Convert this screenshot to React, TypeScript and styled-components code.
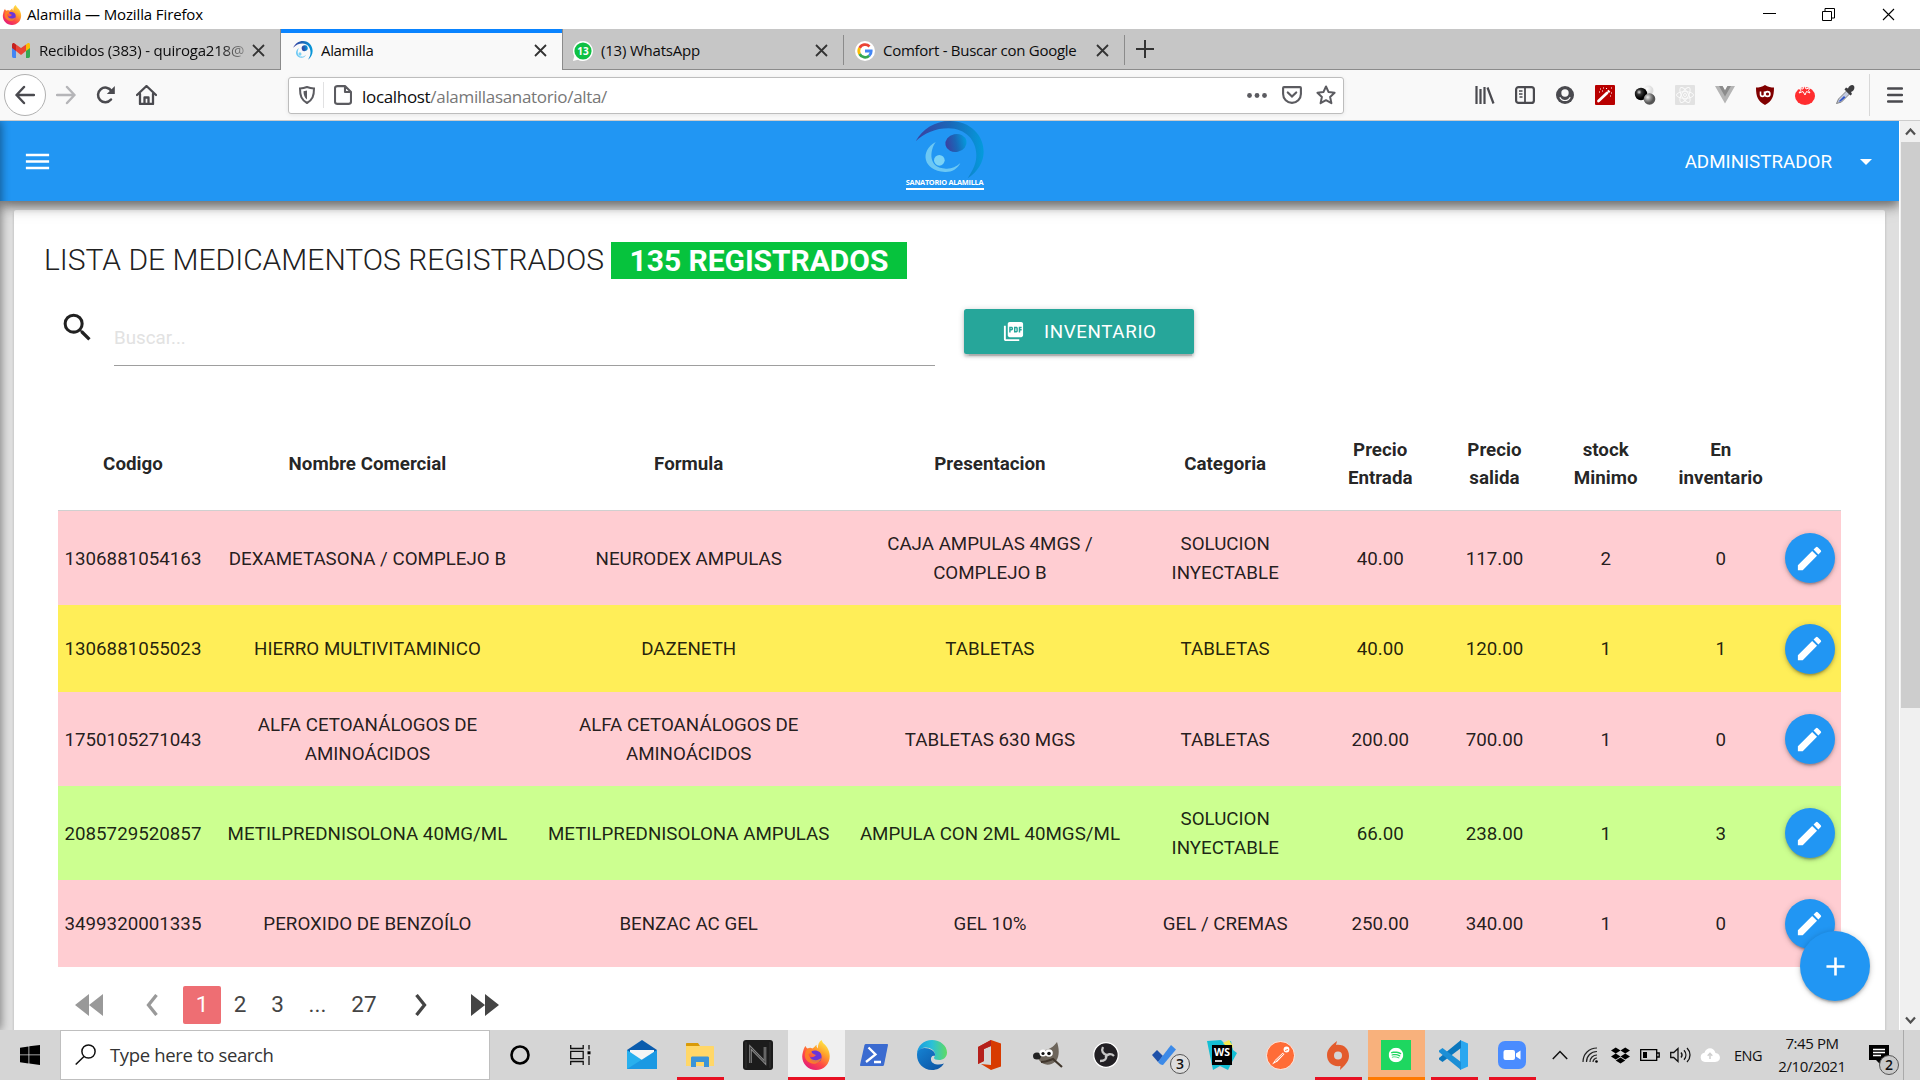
import React from "react";
import styled, { createGlobalStyle, css } from "styled-components";
import { MdEdit, MdSearch, MdPictureAsPdf, MdMenu, MdAdd } from "react-icons/md";
import { FaSpotify, FaDropbox } from "react-icons/fa";

const GlobalStyle = createGlobalStyle`
  * { box-sizing: border-box; }
  html, body { margin: 0; padding: 0; background: #fff; }
  body { width: 1920px; height: 1080px; overflow: hidden; font-family: Roboto, sans-serif; }
  svg { display: block; flex: none; }
`;

const systemFont = css`
  font-family: "Open Sans", "Noto Sans", sans-serif;
`;

const Desktop = styled.div`
  width: 1920px;
  height: 1080px;
  display: flex;
  flex-direction: column;
  overflow: hidden;
`;

/* ---------- window chrome ---------- */

const TitleBar = styled.header`
  ${systemFont}
  height: 29px;
  flex: none;
  display: flex;
  align-items: center;
  padding-left: 2px;
  background: #fff;
  color: #000;
  font-size: 15px;
  letter-spacing: -0.12px;
`;

const WindowTitle = styled.span`
  margin-left: 5px;
  flex: 1;
  padding-bottom: 2px;
  white-space: nowrap;
`;

const WindowControls = styled.div`
  display: flex;
  width: 178px;
  justify-content: space-around;
  margin-right: 2px;
`;

const TabStrip = styled.nav`
  ${systemFont}
  height: 41px;
  flex: none;
  display: flex;
  background: #c6c6c6;
  box-shadow: inset 0 -1px #8b8b8b;
`;

const TabItem = styled.div<{ $active?: boolean; $width: number; $pad: number }>`
  width: ${(p) => p.$width}px;
  height: 41px;
  display: flex;
  align-items: center;
  padding: 2px 15px 0 ${(p) => p.$pad}px;
  background: ${(p) => (p.$active ? "#f9f9f9" : "transparent")};
  ${(p) =>
    p.$active &&
    css`
      border-left: 1px solid #8b8b8b;
      border-right: 1px solid #8b8b8b;
      box-shadow: inset 0 4px #0a84ff;
    `}
`;

const TabLabel = styled.span<{ $fade?: boolean; $tracking?: number }>`
  flex: 1;
  margin-left: ${(p) => (p.$fade ? 9 : 8)}px;
  padding-bottom: 2px;
  overflow: hidden;
  white-space: nowrap;
  font-size: 15px;
  letter-spacing: ${(p) => p.$tracking ?? -0.2}px;
  color: #0c0c0d;
  ${(p) =>
    p.$fade &&
    css`
      mask-image: linear-gradient(to right, #000 86%, rgba(0, 0, 0, 0.25));
      margin-right: 5px;
    `}
`;

const TabDivider = styled.i`
  width: 1px;
  height: 30px;
  margin-top: 6px;
  background: #8b8b8b;
`;

const NewTab = styled.div`
  padding: 11px 0 0 11px;
`;

const Toolbar = styled.div`
  ${systemFont}
  height: 51px;
  flex: none;
  display: flex;
  align-items: center;
  background: #f9f9f9;
  border-bottom: 1px solid #ccc;
  padding-left: 4px;
`;

const BackButton = styled.div`
  width: 42px;
  height: 42px;
  border-radius: 50%;
  border: 1px solid #b1b1b1;
  background: #fff;
  display: grid;
  place-items: center;
`;

const NavIcon = styled.div`
  width: 40px;
  display: grid;
  place-items: center;
`;

const AddressBar = styled.div`
  flex: none;
  width: 1056px;
  height: 37px;
  margin-left: 122px;
  display: flex;
  align-items: center;
  background: #fff;
  border: 1px solid #bdbdbd;
  border-radius: 3px;
  box-shadow: 0 1px 4px rgba(0, 0, 0, 0.08);
  padding: 0 7px 0 10px;
`;

const AddressDivider = styled.i`
  width: 1px;
  height: 26px;
  margin: 0 10px 0 8px;
  background: #e1e1e2;
`;

const Address = styled.span`
  flex: 1;
  margin-left: 10px;
  padding-top: 2px;
  font-size: 17px;
  letter-spacing: -0.32px;
  color: #777;
  white-space: nowrap;
  b {
    font-weight: 400;
    color: #0c0c0d;
  }
`;

const AddressActions = styled.div`
  display: flex;
  align-items: center;
  gap: 14.5px;
`;

const Extensions = styled.div`
  display: flex;
  flex: none;
  margin-left: 121px;
`;

const ExtensionSlot = styled.div`
  width: 40px;
  height: 42px;
  display: grid;
  place-items: center;
`;

const MenuSlot = styled.div`
  flex: none;
  margin-left: 4px;
  width: 51px;
  height: 42px;
  border-left: 1px solid #d8d8d8;
  display: grid;
  place-items: center;
`;

/* ---------- web page ---------- */

const Viewport = styled.div`
  height: 909px;
  flex: none;
  display: flex;
  overflow: hidden;
`;

const Page = styled.div`
  position: relative;
  width: 1899px;
  height: 909px;
  overflow: hidden;
  background: #dfdfdf;
`;

const DrawerShadow = styled.div`
  position: absolute;
  z-index: 3;
  left: -10px;
  top: 0;
  bottom: 0;
  width: 10px;
  box-shadow: 1px 0 10px rgba(0, 0, 0, 0.45);
`;

const AppBar = styled.div`
  position: relative;
  z-index: 2;
  height: 80px;
  display: flex;
  align-items: center;
  justify-content: space-between;
  padding: 0 27px 0 22px;
  background: #2196f3;
  color: #fff;
  box-shadow: 0 5px 10px rgba(0, 0, 0, 0.42), 0 2px 18px rgba(0, 0, 0, 0.25);
`;

const Brand = styled.div`
  align-self: flex-start;
  margin-left: 152px;
  width: 80px;
  display: flex;
  flex-direction: column;
  align-items: center;
`;

const BrandMark = styled.div`
  align-self: flex-end;
`;

const BrandName = styled.div`
  font: 700 7.4px "Open Sans", sans-serif;
  line-height: 9px;
  white-space: nowrap;
  letter-spacing: -0.3px;
  width: 78px;
  height: 12px;
  border-bottom: 2px solid #fff;
  margin-top: -1px;
`;

const UserMenu = styled.div`
  display: flex;
  align-items: center;
  gap: 28px;
  font-size: 18.75px;
  padding-top: 1px;
`;

const Caret = styled.i`
  border: 6px solid transparent;
  border-top: 6px solid #fff;
  border-bottom: 0;
`;

const Card = styled.main`
  margin: 9px 14px 0;
  height: 860px;
  padding: 29px 30px 0;
  background: #fff;
  border-radius: 2px;
  box-shadow: 0 2px 3px rgba(0, 0, 0, 0.2);
`;

const Heading = styled.h1`
  margin: 0;
  height: 42px;
  line-height: 42px;
  font-size: 30px;
  font-weight: 300;
  color: #212121;
  white-space: nowrap;
  display: flex;
  align-items: center;
  gap: 7px;
`;

const CountBadge = styled.span`
  height: 37px;
  line-height: 37px;
  padding: 0 18.5px;
  background: #06c33d;
  color: #fff;
  font-weight: 700;
  letter-spacing: -0.05px;
`;

const Tools = styled.div`
  display: flex;
  margin-left: 15px;
  height: 84px;
  margin-top: 28px;
`;

const SearchLabel = styled.div`
  width: 55px;
  color: #212121;
`;

const SearchField = styled.div`
  width: 821px;
  height: 57px;
  border-bottom: 1px solid #9e9e9e;
  display: flex;
  align-items: center;
  padding-top: 2px;
  font-size: 18.75px;
  color: #e2e2e2;
`;

const ReportButton = styled.button`
  margin-left: 29px;
  width: 230px;
  height: 45px;
  border: 0;
  border-radius: 2.5px;
  background: #26a69a;
  color: #fff;
  font: 400 18.75px Roboto, sans-serif;
  letter-spacing: 0.62px;
  display: flex;
  align-items: center;
  gap: 19px;
  padding: 0 0 0 38px;
  box-shadow: 0 2.5px 2.5px rgba(0, 0, 0, 0.14), 0 4px 1px -2.5px rgba(0, 0, 0, 0.12), 0 1px 6px rgba(0, 0, 0, 0.2);
`;

const Table = styled.section`
  margin: 24px 14px 0;
  width: 1783px;
  font-size: 18.75px;
  line-height: 28.125px;
  color: rgba(0, 0, 0, 0.87);
`;

const columns = css`
  display: grid;
  grid-template-columns: 149.5px 319.5px 323px 279.5px 191px 119px 109.5px 113px 117px 62px;
  align-items: center;
  text-align: center;
`;

const HeadRow = styled.div`
  ${columns}
  height: 94px;
  border-bottom: 1px solid #d0d0d0;
  font-weight: 700;
`;

const Row = styled.div<{ $tone: "pink" | "yellow" | "green"; $height: number }>`
  ${columns}
  height: ${(p) => p.$height}px;
  background: ${(p) => ({ pink: "#ffcdd2", yellow: "#ffee58", green: "#ccff90" })[p.$tone]};
`;

const Cell = styled.div`
  padding: 1.2px 0 0 0.4px;
  white-space: pre-line;
`;

const EditButton = styled.div`
  width: 50px;
  height: 50px;
  margin-left: 5.5px;
  border-radius: 50%;
  background: #2196f3;
  color: #fff;
  display: grid;
  place-items: center;
  box-shadow: 0 2.5px 2.5px rgba(0, 0, 0, 0.14), 0 4px 1px -2.5px rgba(0, 0, 0, 0.12), 0 1px 6px rgba(0, 0, 0, 0.2);
`;

const Pagination = styled.div`
  display: flex;
  align-items: center;
  margin: 19px 0 0 23px;
  height: 38px;
  font-size: 22.5px;
  color: #444;
`;

const PageItem = styled.span<{ $width: number; $current?: boolean; $muted?: boolean }>`
  width: ${(p) => p.$width}px;
  height: 38px;
  display: grid;
  place-items: center;
  padding-bottom: 2px;
  border-radius: 2px;
  color: ${(p) => (p.$current ? "#fff" : p.$muted ? "#999" : "#444")};
  background: ${(p) => (p.$current ? "#ee6e73" : "transparent")};
  svg {
    margin-top: 2px;
  }
`;

const AddButton = styled.div`
  position: absolute;
  z-index: 2;
  right: 29px;
  bottom: 29px;
  width: 70px;
  height: 70px;
  border-radius: 50%;
  background: #2196f3;
  color: #fff;
  display: grid;
  place-items: center;
  box-shadow: 0 2.5px 2.5px rgba(0, 0, 0, 0.14), 0 4px 1px -2.5px rgba(0, 0, 0, 0.12), 0 1px 6px rgba(0, 0, 0, 0.2);
`;

const Scrollbar = styled.aside`
  width: 21px;
  background: #f0f0f0;
  border-left: 1px solid #fff;
  display: flex;
  flex-direction: column;
  align-items: center;
`;

const ScrollArrow = styled.div`
  height: 21px;
  display: grid;
  place-items: center;
`;

const ScrollThumb = styled.div`
  width: 19px;
  height: 566px;
  margin-bottom: auto;
  background: #cdcdcd;
`;

/* ---------- taskbar ---------- */

const Taskbar = styled.footer`
  ${systemFont}
  height: 50px;
  flex: none;
  display: flex;
  background: #d5d5d5;
  color: #111;
`;

const StartButton = styled.div`
  width: 60px;
  display: grid;
  place-items: center;
`;

const TaskSearch = styled.div`
  width: 430px;
  height: 50px;
  border: 1px solid #bfbfbf;
  background: #fff;
  display: flex;
  align-items: center;
  gap: 14px;
  padding: 0 0 1px 14px;
  font-size: 18.5px;
  letter-spacing: -0.35px;
  color: #333;
`;

const SystemButtons = styled.div`
  display: flex;
  margin-right: 3px;
`;

const SystemButton = styled.div`
  width: 60px;
  display: grid;
  place-items: center;
`;

const TaskApp = styled.div<{ $bar?: number; $barColor?: string; $fill?: string }>`
  position: relative;
  width: 58px;
  display: grid;
  place-items: center;
  &::before {
    content: "";
    position: absolute;
    inset: 0 0.5px;
    background: ${(p) => p.$fill ?? "transparent"};
  }
  &::after {
    content: "";
    position: absolute;
    bottom: 0;
    left: calc(50% - ${(p) => (p.$bar ?? 0) / 2}px);
    width: ${(p) => p.$bar ?? 0}px;
    height: 3px;
    background: ${(p) => p.$barColor ?? "#e81123"};
  }
  svg {
    position: relative;
  }
`;

const Tray = styled.div`
  display: flex;
  align-items: center;
  margin-left: 4px;
`;

const TraySlot = styled.div<{ $width?: number }>`
  width: ${(p) => p.$width ?? 30}px;
  display: grid;
  place-items: center;
`;

const Language = styled.span`
  width: 46px;
  text-align: center;
  font-size: 14.5px;
  letter-spacing: -0.5px;
`;

const Clock = styled.div`
  width: 82px;
  padding-bottom: 1px;
  text-align: center;
  font-size: 15px;
  line-height: 23px;
  letter-spacing: -0.42px;
  white-space: nowrap;
`;

const Counter = styled.span<{ $x: number; $y: number; $fill: string }>`
  position: absolute;
  left: ${(p) => p.$x}px;
  top: ${(p) => p.$y}px;
  width: 20px;
  height: 20px;
  border: 1px solid #555;
  border-radius: 50%;
  background: ${(p) => p.$fill};
  font-size: 14px;
  font-weight: 600;
  line-height: 18px;
  text-align: center;
`;

const Notifications = styled.div`
  position: relative;
  width: 50px;
  height: 50px;
  margin-left: 1px;
  display: grid;
  place-items: center;
  border-right: 1px solid #aaa;
`;

/* ---------- drawings ---------- */

const FirefoxLogo = ({ size }: { size: number }) => (
  <svg width={size} height={size} viewBox="0 0 32 32">
    <defs>
      <linearGradient id="ffa" x1=".85" y1="0" x2=".2" y2="1">
        <stop offset="0" stopColor="#fff44f" />
        <stop offset=".35" stopColor="#ffa32b" />
        <stop offset=".65" stopColor="#ff4a45" />
        <stop offset="1" stopColor="#e0157f" />
      </linearGradient>
    </defs>
    <path d="M5 6c0 2 1 2 2 3 2-1 4-1 5 0 2-1 3-3 5-4-1 2 0 3 1 4 0-4 1-7 4-9 1 4 5 5 7 10 5 11-2 22-13 22C6 32-1 23 2 13c1-3 1-5 3-7z" fill="url(#ffa)" />
    <path d="M11 12c5-2 11 0 11 6 0 4-3 6-6 6-4 0-7-3-6-6 2 1 4 0 6-2-2-1-4-1-5-4z" fill="#6b35d8" />
    <path d="M5 12c2-3 5-3 7-1-1 2-2 3-4 4 1 6 8 9 14 4-2 6-8 8-13 5S3 17 5 12z" fill="#ff8a20" opacity=".8" />
  </svg>
);

const Cross = ({ thin }: { thin?: boolean }) => (
  <svg width="13" height="13" viewBox="0 0 13 13">
    <path d="M1 1l11 11M12 1L1 12" stroke={thin ? "#000" : "#333"} strokeWidth={thin ? 1.1 : 1.8} fill="none" />
  </svg>
);

const LogoMark = ({ width, height, id }: { width: number; height: number; id: string }) => (
  <svg width={width} height={height} viewBox="76 18 210 174" preserveAspectRatio="none">
    <defs>
      <linearGradient id={id + "a"}>
        <stop offset="0" stopColor="#3b3fa0" />
        <stop offset=".5" stopColor="#1a67b8" />
        <stop offset="1" stopColor="#049bdc" />
      </linearGradient>
    </defs>
    <path d="M78 79C98 42 136 18 181 18c61 0 101 43 101 92 0 31-18 60-48 80 17-27 26-45 26-70 0-43-32-80-84-80-38 0-72 14-98 39z" fill={`url(#${id}a)`} />
    <ellipse cx="199" cy="84" rx="32" ry="27" fill={`url(#${id}a)`} transform="rotate(-12 199 84)" />
    <path d="M138 81c-18 26-24 78 31 80 16 1 30-5 43-17-8 18-27 28-46 27-66-4-77-63-28-90z" fill="#6cc8f4" />
    <circle cx="149" cy="136" r="16" fill="#7bd3f6" />
  </svg>
);

const Gmail = () => (
  <svg width="18" height="15" viewBox="0 0 18 15">
    <path d="M0 2.5V13c0 1 .5 2 1.500 2H4V6z" fill="#4285f4" />
    <path d="M18 2.500V13c0 1-.5 2-1.500 2H14V6z" fill="#34a853" />
    <path d="M14 1.500L16 0c1.200-.3 2 .6 2 2v3l-4 3z" fill="#fbbc04" />
    <path d="M4 1.500L2 0C.8-.3 0 .600 0 2v3l4 3z" fill="#c5221f" />
    <path d="M4 8V1.500L9 5l5-3.500V8l-5 4z" fill="#ea4335" />
  </svg>
);

const WhatsApp = () => (
  <svg width="20" height="20" viewBox="0 0 20 20">
    <path d="M10 0a10 10 0 1 1-5 18.700L0 20l1.300-5A10 10 0 0 1 10 0z" fill="#fff" />
    <circle cx="10" cy="10" r="8.600" fill="#0fc144" />
    <text x="10" y="13.600" fontFamily="Open Sans" fontWeight="700" fontSize="10" fill="#fff" textAnchor="middle">13</text>
  </svg>
);

const Google = () => (
  <svg width="20" height="20" viewBox="0 0 20 20">
    <circle cx="10" cy="10" r="10" fill="#fff" />
    <g fill="none" strokeWidth="2.800">
      <path d="M14.500 5.500A6.200 6.200 0 0 0 4.600 7" stroke="#ea4335" />
      <path d="M4.600 7a6.200 6.200 0 0 0 0 6" stroke="#fbbc05" />
      <path d="M4.600 13a6.200 6.200 0 0 0 9.600 1.700" stroke="#34a853" />
      <path d="M14.200 14.700A6 6 0 0 0 16.200 10H10" stroke="#4285f4" />
    </g>
  </svg>
);

const Line = ({ d, size = 20, color = "#4a4a4f", w = 2.4, fill = "none" }: { d: string; size?: number; color?: string; w?: number; fill?: string }) => (
  <svg width={size} height={size} viewBox="0 0 20 20">
    <path d={d} stroke={color} strokeWidth={w} fill={fill} strokeLinecap="round" strokeLinejoin="round" />
  </svg>
);

const extensionIcons = [
  <svg key="library" width="20" height="18" viewBox="0 0 20 18">
    <path d="M1.500 0v18M5.500 3v15M9.500 1v17M12.500 1.500l6 16" stroke="#4a4a4f" strokeWidth="2.200" fill="none" />
  </svg>,
  <svg key="sidebar" width="20" height="18" viewBox="0 0 20 18">
    <rect x="1.100" y="1.100" width="17.800" height="15.800" rx="2.500" stroke="#4a4a4f" strokeWidth="2.200" fill="none" />
    <path d="M10 1v16" stroke="#4a4a4f" strokeWidth="1.800" />
    <path d="M4 5h3.500M4 8h3.500M4.500 11h3" stroke="#4a4a4f" strokeWidth="1.300" />
  </svg>,
  <svg key="account" width="18" height="18" viewBox="0 0 18 18">
    <circle cx="9" cy="9" r="9" fill="#4a4a4f" />
    <circle cx="9" cy="7" r="3.700" fill="#f9f9f9" />
    <path d="M3.800 11.200c2.200 4.400 8.200 4.400 10.400 0" stroke="#f9f9f9" strokeWidth="1.200" fill="none" />
  </svg>,
  <svg key="wand" width="20" height="20" viewBox="0 0 20 20">
    <rect width="20" height="20" rx="1" fill="#b80000" />
    <path d="M3.500 16L12 8" stroke="#fff" strokeWidth="2.800" strokeLinecap="round" />
    <path d="M13 7l1.500-1.300" stroke="#fff" strokeWidth="2.600" />
    <path d="M5 4h1M8 3h1M7 6h1M11 3.500h1M16 3h1M16 8h1M15 11h1M4 7h1" stroke="#fff" strokeWidth="1.200" />
  </svg>,
  <svg key="spheres" width="22" height="20" viewBox="0 0 22 20">
    <defs>
      <radialGradient id="sb" cx=".35" cy=".35"><stop offset="0" stopColor="#ddd" /><stop offset=".4" stopColor="#333" /><stop offset="1" stopColor="#000" /></radialGradient>
      <radialGradient id="sg" cx=".35" cy=".35"><stop offset="0" stopColor="#eee" /><stop offset=".6" stopColor="#888" /><stop offset="1" stopColor="#555" /></radialGradient>
      <radialGradient id="sw" cx=".35" cy=".35"><stop offset="0" stopColor="#fff" /><stop offset="1" stopColor="#ddd" /></radialGradient>
    </defs>
    <circle cx="14.500" cy="5.500" r="5" fill="url(#sw)" />
    <circle cx="7" cy="9" r="6.200" fill="url(#sb)" />
    <circle cx="15.500" cy="14" r="5.800" fill="url(#sg)" />
  </svg>,
  <svg key="react" width="20" height="20" viewBox="0 0 20 20">
    <rect width="20" height="20" rx="1" fill="#e2e2e2" />
    <g fill="none" stroke="#fafafa" strokeWidth="1">
      <ellipse cx="10" cy="10" rx="8.500" ry="3.400" />
      <ellipse cx="10" cy="10" rx="8.500" ry="3.400" transform="rotate(60 10 10)" />
      <ellipse cx="10" cy="10" rx="8.500" ry="3.400" transform="rotate(120 10 10)" />
      <circle cx="10" cy="10" r="1.500" />
    </g>
  </svg>,
  <svg key="vue" width="20" height="18" viewBox="0 0 20 18">
    <path d="M0 0h7.500L10 4.500 12.500 0H20L10 17.500z" fill="#b5b5b5" />
    <path d="M4 0h3.500L10 4.500 12.500 0H16l-6 10.500z" fill="#8c8c8c" />
  </svg>,
  <svg key="ublock" width="18" height="20" viewBox="0 0 18 20">
    <path d="M9 0c3 2 6 2.500 9 2.500C18 12 16 16 9 20 2 16 0 12 0 2.500 3 2.500 6 2 9 0z" fill="#800000" />
    <path d="M4.500 6.500v3c0 2.500 4 2.500 4 0v-3" stroke="#fff" strokeWidth="1.600" fill="none" />
    <circle cx="11.500" cy="9" r="2.400" stroke="#fff" strokeWidth="1.600" fill="none" />
  </svg>,
  <svg key="tomato" width="20" height="20" viewBox="0 0 20 20">
    <ellipse cx="10" cy="11" rx="10" ry="9" fill="#ff2d2f" />
    <path d="M4 3.500l4 .5 1.500-3.500L11 4l4.500-1.500L13.500 5.500 15 8l-3.500-1.500L10 10 8 6.500 4 8l2-2.800z" fill="#ff2d2f" stroke="#fff" strokeWidth="1" />
  </svg>,
  <svg key="picker" width="20" height="20" viewBox="0 0 20 20">
    <path d="M1.500 18.500l2-4.500 8-8 3 3-8 8z" fill="#c3cbe0" stroke="#777" strokeWidth=".9" />
    <path d="M3.500 16.500l5.500-5.500 1.500 1.500-5 4z" fill="#3155c8" />
    <path d="M9.500 4.500l6 6 1.500-1.500-1-2c3-1 4-4 3-6-1.500-2-5-.5-6 2.500l-2-1z" fill="#3d3d40" />
  </svg>,
];

const PageArrow = ({ double, left }: { double?: boolean; left?: boolean }) => (
  <svg width={double ? 28 : 12} height="22" viewBox={double ? "0 0 28 22" : "0 0 12 22"} transform={left ? "scale(-1 1)" : undefined}>
    {double ? <path d="M0 0l14 11L0 22zM14 0l14 11-14 11z" fill="currentColor" /> : <path d="M1.500 1l8 10-8 10" fill="none" stroke="currentColor" strokeWidth="3.300" />}
  </svg>
);

const taskIcons: { name: string; icon: React.ReactNode; bar?: number; barColor?: string; fill?: string; count?: number }[] = [
  {
    name: "mail",
    icon: (
      <svg width="30" height="30" viewBox="0 0 30 30">
        <path d="M0 10L15 0l15 10v6H0z" fill="#0a5cad" />
        <path d="M3 10h24v10H3z" fill="#f5f5f5" />
        <path d="M0 10l15 10L30 10v19H0z" fill="#28b0ee" />
        <path d="M30 10L0 29h30z" fill="#1792df" opacity=".75" />
      </svg>
    ),
  },
  {
    name: "files",
    bar: 47,
    icon: (
      <svg width="28" height="24" viewBox="0 0 28 24">
        <path d="M0 1c0-.6.4-1 1-1h11l2 3H0z" fill="#d99a08" />
        <path d="M0 3h27c.6 0 1 .4 1 1v19H0z" fill="#ffd768" />
        <path d="M5 24v-9c0-1 .5-1.500 1.500-1.500h15c1 0 1.500.5 1.500 1.500v9h-5v-5h-8v5z" fill="#3a94d8" />
      </svg>
    ),
  },
  {
    name: "notes",
    icon: (
      <svg width="30" height="30" viewBox="0 0 30 30">
        <rect width="30" height="30" rx="3" fill="#1c1c1c" />
        <path d="M3 2v26M27 2v26" stroke="#333" />
        <path d="M7.500 23V7.500L22 22.500V7" stroke="#888" strokeWidth="2.600" fill="none" />
        <path d="M7.500 23V7.500L22 22.500V7" stroke="#333" strokeWidth=".8" fill="none" />
      </svg>
    ),
  },
  { name: "firefox", icon: <FirefoxLogo size={30} />, bar: 57, fill: "#f0f0f0" },
  {
    name: "powershell",
    icon: (
      <svg width="28" height="22" viewBox="0 0 28 22">
        <path d="M6 0h21c.8 0 1 .5 1 1l-4 20c-.2.700-.700 1-1.300 1H1c-.8 0-1-.5-1-1L4.500 1C4.700.3 5.200 0 6 0z" fill="#3b6bd0" />
        <path d="M8.500 3.500l7 7L6 18M14 18h7" stroke="#fff" strokeWidth="2.300" fill="none" />
      </svg>
    ),
  },
  {
    name: "edge",
    icon: (
      <svg width="30" height="30" viewBox="0 0 30 30">
        <defs>
          <linearGradient id="edt"><stop offset="0" stopColor="#1a9be0" /><stop offset=".5" stopColor="#2bc0d8" /><stop offset="1" stopColor="#5fdb62" /></linearGradient>
          <linearGradient id="edb" x1="0" y1="0" x2="1" y2="1"><stop offset="0" stopColor="#1583d3" /><stop offset="1" stopColor="#0c50a0" /></linearGradient>
        </defs>
        <path d="M0 14C0 6 7 0 15 0s15 5.500 15 12.500c0 5-4 7.500-8 7.500-3 0-5-1-5-2s1-1.500 1-3.500C18 10 13 7 8 7.500 4 8 1 11 0 14z" fill="url(#edt)" />
        <path d="M0 15c0-4 3-7 7.500-7C13 8 18 11 18 14.500c0 .5 0 1-.5 1.500-2-1-4 1-3.500 4 .7 4 7 6 13 3.500C24 28 20 30 15 30 6 30 0 23 0 15z" fill="url(#edb)" />
      </svg>
    ),
  },
  {
    name: "office",
    icon: (
      <svg width="24" height="30" viewBox="0 0 24 30">
        <path d="M0 7L13 0l10 3.500v23L13 30 3 24l10 1V6L6 9v12l-6 3z" fill="#d83b01" />
        <path d="M0 7L13 0v6L6 9v12l-6 3z" fill="#b5201c" />
      </svg>
    ),
  },
  {
    name: "gimp",
    icon: (
      <svg width="30" height="26" viewBox="0 0 30 26">
        <path d="M24 0c2 6 3 14-1 19-5 5-13 5-17-1L4 15l5-7c4 1 11-2 15-8z" fill="#6e665c" />
        <ellipse cx="4" cy="14" rx="4" ry="3.500" fill="#222" />
        <circle cx="10" cy="11" r="3.500" fill="#fff" /><circle cx="16" cy="11" r="3.800" fill="#fff" />
        <circle cx="10" cy="11.500" r="1.600" fill="#111" /><circle cx="16" cy="11.500" r="1.800" fill="#111" />
        <path d="M8 20c5 0 9-2 12-3l9 8" stroke="#40362c" strokeWidth="2.200" fill="none" />
      </svg>
    ),
  },
  {
    name: "obs",
    icon: (
      <svg width="26" height="26" viewBox="0 0 26 26">
        <circle cx="13" cy="13" r="12.300" fill="#222024" stroke="#fff" strokeWidth="1.300" />
        <g fill="none" stroke="#c6c6c6" strokeWidth="2.300">
          <path d="M10 5c-2 4 0 7 4 8" />
          <path d="M21 14c-3-3-7-2-8.500 1" />
          <path d="M7 19c5 0 7-2 6-6" />
        </g>
      </svg>
    ),
  },
  {
    name: "todo",
    count: 3,
    icon: (
      <svg width="24" height="20" viewBox="0 0 24 20">
        <path d="M0 10l5-5 6 6-5 6z" fill="#1e50a8" />
        <path d="M6 17L19 0l5 4.500L11 20c-2 0-3.500-1-5-3z" fill="#3c8ae8" />
      </svg>
    ),
  },
  {
    name: "webstorm",
    icon: (
      <svg width="30" height="30" viewBox="0 0 30 30">
        <path d="M0 1l14-1 4 4 6-3 2 9 4 3-5 9-4 8-8-4-7 4-3-14z" fill="#14bfd4" />
        <path d="M16 3l6-3 4 6-2 5z" fill="#f5ea4e" />
        <rect x="5" y="5" width="20" height="20" fill="#000" />
        <text x="15" y="15.500" textAnchor="middle" fontFamily="Open Sans" fontWeight="700" fontSize="10.500" fill="#fff">WS</text>
        <path d="M8 21h7" stroke="#fff" strokeWidth="1.600" />
      </svg>
    ),
  },
  {
    name: "postman",
    icon: (
      <svg width="29" height="29" viewBox="0 0 29 29">
        <circle cx="14.500" cy="14.500" r="14" fill="#ff6c37" stroke="#fff" strokeWidth=".8" />
        <path d="M6 23.500l3.500-5 7.500-7 1.500 1.500-7 7.500z" fill="#fff" />
        <circle cx="20.500" cy="8.500" r="2.900" fill="#fff" />
        <path d="M9 20.500l8.500-8M19 9.500l3-1" stroke="#ff6c37" strokeWidth=".9" />
      </svg>
    ),
  },
  {
    name: "origin",
    bar: 47,
    icon: (
      <svg width="22" height="29" viewBox="0 0 22 29">
        <path d="M10 0l-1 4c8-1 13 4 13 11 0 6-5 10-9 14l.5-4C5 26 0 21 0 14 0 8 5 4 10 0z" fill="#e35b2c" />
        <circle cx="11" cy="14.500" r="4" fill="#d5d5d5" />
      </svg>
    ),
  },
  {
    name: "spotify",
    bar: 57,
    barColor: "#ff7a00",
    fill: "#f8b17c",
    icon: (
      <svg width="30" height="30" viewBox="0 0 30 30">
        <rect width="30" height="30" fill="#1ed760" />
        <FaSpotify x="7.500" y="7.500" size={15} color="#fff" />
      </svg>
    ),
  },
  {
    name: "vscode",
    bar: 47,
    icon: (
      <svg width="30" height="30" viewBox="0 0 30 30">
        <path d="M21 0l8 3.500v23L21 30z" fill="#2aa7f0" />
        <path d="M22 0v8L3.500 22 0 19.500V18z" fill="#0b77bd" />
        <path d="M22 30v-8L3.500 8 0 10.500V12z" fill="#1c8fd6" />
      </svg>
    ),
  },
  {
    name: "zoom",
    bar: 47,
    icon: (
      <svg width="28" height="28" viewBox="0 0 28 28">
        <rect width="28" height="28" rx="7" fill="#4a8cff" />
        <rect x="5.500" y="9" width="11.500" height="10" rx="2" fill="#fff" />
        <path d="M18 12.500l4.500-3v9l-4.500-3z" fill="#fff" />
      </svg>
    ),
  },
];

/* ---------- data ---------- */

const headers = ["Codigo", "Nombre Comercial", "Formula", "Presentacion", "Categoria", "Precio\nEntrada", "Precio\nsalida", "stock\nMinimo", "En\ninventario"];

const medicines: { tone: "pink" | "yellow" | "green"; height: number; cells: string[] }[] = [
  { tone: "pink", height: 94, cells: ["1306881054163", "DEXAMETASONA / COMPLEJO B", "NEURODEX AMPULAS", "CAJA AMPULAS 4MGS /\nCOMPLEJO B", "SOLUCION\nINYECTABLE", "40.00", "117.00", "2", "0"] },
  { tone: "yellow", height: 87, cells: ["1306881055023", "HIERRO MULTIVITAMINICO", "DAZENETH", "TABLETAS", "TABLETAS", "40.00", "120.00", "1", "1"] },
  { tone: "pink", height: 94, cells: ["1750105271043", "ALFA CETOANÁLOGOS DE\nAMINOÁCIDOS", "ALFA CETOANÁLOGOS DE\nAMINOÁCIDOS", "TABLETAS 630 MGS", "TABLETAS", "200.00", "700.00", "1", "0"] },
  { tone: "green", height: 94, cells: ["2085729520857", "METILPREDNISOLONA 40MG/ML", "METILPREDNISOLONA AMPULAS", "AMPULA CON 2ML 40MGS/ML", "SOLUCION\nINYECTABLE", "66.00", "238.00", "1", "3"] },
  { tone: "pink", height: 87, cells: ["3499320001335", "PEROXIDO DE BENZOÍLO", "BENZAC AC GEL", "GEL 10%", "GEL / CREMAS", "250.00", "340.00", "1", "0"] },
];

export default function App() {
  return (
    <Desktop>
      <GlobalStyle />
      <TitleBar>
        <FirefoxLogo size={20} />
        <WindowTitle>Alamilla — Mozilla Firefox</WindowTitle>
        <WindowControls>
          <svg width="13" height="13" viewBox="0 0 13 13"><path d="M0 5.500h13" stroke="#000" /></svg>
          <svg width="13" height="13" viewBox="0 0 13 13"><path d="M.5 3.500h9v9h-9zM3 3V.5h9.500V10H10" stroke="#000" fill="none" /></svg>
          <Cross thin />
        </WindowControls>
      </TitleBar>

      <TabStrip>
        <TabItem $width={280} $pad={12}>
          <Gmail />
          <TabLabel $fade>Recibidos (383) - quiroga218@</TabLabel>
          <Cross />
        </TabItem>
        <TabItem $width={283} $pad={12} $active>
          <LogoMark width={20} height={19} id="fav" />
          <TabLabel $tracking={-0.35}>Alamilla</TabLabel>
          <Cross />
        </TabItem>
        <TabItem $width={280} $pad={10}>
          <WhatsApp />
          <TabLabel>(13) WhatsApp</TabLabel>
          <Cross />
        </TabItem>
        <TabDivider />
        <TabItem $width={280} $pad={11}>
          <Google />
          <TabLabel $tracking={-0.27}>Comfort - Buscar con Google</TabLabel>
          <Cross />
        </TabItem>
        <TabDivider />
        <NewTab>
          <svg width="18" height="18" viewBox="0 0 18 18"><path d="M9 0v18M0 9h18" stroke="#333" strokeWidth="2" /></svg>
        </NewTab>
      </TabStrip>

      <Toolbar>
        <BackButton><Line d="M19 10H1.500M9 2L1.500 10 9 18" /></BackButton>
        <NavIcon><Line d="M1 10h17.500M11 2l7.500 8-7.500 8" color="#b5b5b8" /></NavIcon>
        <NavIcon>
          <svg width="20" height="20" viewBox="0 0 20 20">
            <path d="M15 14.500A7.300 7.300 0 1 1 15.500 6" stroke="#4a4a4f" strokeWidth="2.500" fill="none" strokeLinecap="round" />
            <path d="M18.800 1v8h-8z" fill="#4a4a4f" />
          </svg>
        </NavIcon>
        <NavIcon>
          <svg width="21" height="20" viewBox="0 0 21 20">
            <path d="M1 10l9.500-9L20 10M4 9v10h13V9M8.500 19v-6.500h4V19" stroke="#4a4a4f" strokeWidth="2.300" fill="none" strokeLinejoin="round" strokeLinecap="round" />
          </svg>
        </NavIcon>
        <AddressBar>
          <svg width="16" height="18" viewBox="0 0 16 18">
            <path d="M8 1c2.500.9 4.500 1.300 7 1.500C15 10 13.500 14 8 17 2.500 14 1 10 1 2.500 3.500 2.300 5.500 1.900 8 1z" fill="none" stroke="#5b5b60" strokeWidth="2" />
            <path d="M8 4.500v9C5.500 11.500 4.500 9 4.500 5.200z" fill="#5b5b60" />
          </svg>
          <AddressDivider />
          <svg width="18" height="20" viewBox="0 0 18 20">
            <path d="M3.500 1.100h7.500l6 6v9.300c0 1.500-1 2.500-2.500 2.500h-11C2 18.900 1 17.900 1 16.400V3.600c0-1.500 1-2.500 2.500-2.500zM11 1.500V7h5.500" fill="none" stroke="#5b5b60" strokeWidth="2.100" strokeLinejoin="round" />
          </svg>
          <Address><b>localhost</b>/alamillasanatorio/alta/</Address>
          <AddressActions>
            <svg width="20" height="5" viewBox="0 0 20 5"><circle cx="2.500" cy="2.500" r="2.400" fill="#5b5b60" /><circle cx="10" cy="2.500" r="2.400" fill="#5b5b60" /><circle cx="17.500" cy="2.500" r="2.400" fill="#5b5b60" /></svg>
            <svg width="20" height="18" viewBox="0 0 20 18"><path d="M2 1.100h16c.6 0 .9.300.9.900V8a8.900 8.900 0 0 1-17.800 0V2c0-.6.300-.9.900-.9z" fill="none" stroke="#5b5b60" strokeWidth="2.100" /><path d="M5.800 6.500L10 10.500l4.200-4" fill="none" stroke="#5b5b60" strokeWidth="2.200" strokeLinecap="round" /></svg>
            <Line d="M10 1.500l2.600 5.600 6 .7-4.500 4.100 1.300 6.300L10 15.200l-5.400 3 1.300-6.300L1.400 7.800l6-.7z" color="#5b5b60" w={2} />
          </AddressActions>
        </AddressBar>
        <Extensions>
          {extensionIcons.map((icon, i) => (
            <ExtensionSlot key={i}>{icon}</ExtensionSlot>
          ))}
        </Extensions>
        <MenuSlot>
          <svg width="16" height="16" viewBox="0 0 16 16"><path d="M1 1.500h14M1 8h14M1 14.500h14" stroke="#4a4a4f" strokeWidth="2.400" strokeLinecap="round" /></svg>
        </MenuSlot>
      </Toolbar>

      <Viewport>
        <Page>
          <DrawerShadow />
          <AppBar>
            <MdMenu size={31} />
            <Brand>
              <BrandMark>
                <LogoMark width={70} height={58} id="brand" />
              </BrandMark>
              <BrandName>SANATORIO ALAMILLA</BrandName>
            </Brand>
            <UserMenu>
              ADMINISTRADOR
              <Caret />
            </UserMenu>
          </AppBar>
          <Card>
            <Heading>
              LISTA DE MEDICAMENTOS REGISTRADOS
              <CountBadge>135 REGISTRADOS</CountBadge>
            </Heading>
            <Tools>
              <SearchLabel><MdSearch size={37} /></SearchLabel>
              <SearchField>Buscar...</SearchField>
              <ReportButton>
                <MdPictureAsPdf size={23} />
                INVENTARIO
              </ReportButton>
            </Tools>
            <Table>
              <HeadRow>
                {headers.map((h) => (
                  <Cell key={h}>{h}</Cell>
                ))}
              </HeadRow>
              {medicines.map((m) => (
                <Row key={m.cells[0]} $tone={m.tone} $height={m.height}>
                  {m.cells.map((c, i) => (
                    <Cell key={i}>{c}</Cell>
                  ))}
                  <EditButton><MdEdit size={31} /></EditButton>
                </Row>
              ))}
            </Table>
            <Pagination>
              <PageItem $width={43} $muted><PageArrow double left /></PageItem>
              <PageItem $width={83} $muted><PageArrow left /></PageItem>
              <PageItem $width={38} $current style={{ marginLeft: -10 }}>1</PageItem>
              <PageItem $width={38}>2</PageItem>
              <PageItem $width={37}>3</PageItem>
              <PageItem $width={43}>...</PageItem>
              <PageItem $width={50}>27</PageItem>
              <PageItem $width={64}><PageArrow /></PageItem>
              <PageItem $width={63}><PageArrow double /></PageItem>
            </Pagination>
          </Card>
          <AddButton><MdAdd size={31} /></AddButton>
        </Page>
        <Scrollbar>
          <ScrollArrow>
            <svg width="11" height="8" viewBox="0 0 11 8"><path d="M1 6.500l4.500-5 4.500 5" stroke="#505050" strokeWidth="2.200" fill="none" /></svg>
          </ScrollArrow>
          <ScrollThumb />
          <ScrollArrow>
            <svg width="11" height="8" viewBox="0 0 11 8"><path d="M1 1.500l4.500 5 4.500-5" stroke="#505050" strokeWidth="2.200" fill="none" /></svg>
          </ScrollArrow>
        </Scrollbar>
      </Viewport>

      <Taskbar>
        <StartButton>
          <svg width="20" height="20" viewBox="0 0 20 20"><path d="M0 2.700l8.500-1.200v8H0zM9.300 1.300L20 0v9.500H9.300zM0 10.300h8.500v8.200L0 17.300zM9.300 10.300H20V20L9.300 18.600z" fill="#000" /></svg>
        </StartButton>
        <TaskSearch>
          <svg width="21" height="21" viewBox="0 0 21 21"><circle cx="13.500" cy="7.500" r="6.600" fill="none" stroke="#111" strokeWidth="1.500" /><path d="M9 12.500L.7 20.500" stroke="#111" strokeWidth="1.500" /></svg>
          Type here to search
        </TaskSearch>
        <SystemButtons>
          <SystemButton>
            <svg width="20" height="20" viewBox="0 0 20 20"><circle cx="10" cy="10" r="8.500" fill="none" stroke="#000" strokeWidth="2.600" /></svg>
          </SystemButton>
          <SystemButton>
            <svg width="21" height="20" viewBox="0 0 21 20"><path d="M.7 0v3.500h12.500V0M.7 20v-3.500h12.500V20M.7 6.300h12.500v7.400H.7zM19 0v4.500M19 11v9" fill="none" stroke="#111" strokeWidth="1.300" /><path d="M17.500 6.300h3v3h-3z" fill="#000" /></svg>
          </SystemButton>
        </SystemButtons>
        {taskIcons.map((t) => (
          <TaskApp key={t.name} $bar={t.bar} $barColor={t.barColor} $fill={t.fill}>
            {t.icon}
            {t.count && <Counter $x={35} $y={24} $fill="#dedede">{t.count}</Counter>}
          </TaskApp>
        ))}
        <Tray>
          <TraySlot>
            <svg width="16" height="10" viewBox="0 0 16 10"><path d="M.8 9L8 1.500 15.200 9" stroke="#111" strokeWidth="1.500" fill="none" /></svg>
          </TraySlot>
          <TraySlot>
            <svg width="17" height="16" viewBox="0 0 17 16"><g fill="none" stroke="#222" strokeWidth="1.200"><path d="M1 15C1 7 7 1 15 1" /><path d="M4.500 15C4.500 9 9 4.500 15 4.500" /><path d="M8 15c0-4 3-7 7-7" /><path d="M11 15c0-2 2-4 4-4" /></g><circle cx="14.500" cy="14.500" r="1.300" /></svg>
          </TraySlot>
          <TraySlot><FaDropbox size={19} color="#000" /></TraySlot>
          <TraySlot>
            <svg width="20" height="12" viewBox="0 0 20 12"><path d="M.7.700h16v10.600H.7zM17 4h2.200v4H17" fill="none" stroke="#000" strokeWidth="1.300" /><path d="M3 3h4v6H3z" /></svg>
          </TraySlot>
          <TraySlot>
            <svg width="21" height="16" viewBox="0 0 21 16"><path d="M.7 5.500h3L8 1.500v13l-4.300-4h-3zM11 5.500c1.300 1.500 1.300 3.500 0 5M14 3.300c2.500 2.800 2.500 6.600 0 9.400M17 1c4 4 4 10 0 14" fill="none" stroke="#111" strokeWidth="1.300" /></svg>
          </TraySlot>
          <TraySlot>
            <svg width="20" height="14" viewBox="0 0 20 14"><path d="M5 14a4.700 4.700 0 0 1-.5-9.300C6-1 14-1.500 15.500 5c6 .5 6 9-.5 9z" fill="#fff" /><path d="M10 11V6M7.700 7.700L10 5.300l2.300 2.400" stroke="#cfcfcf" strokeWidth="1.500" fill="none" /></svg>
          </TraySlot>
          <Language>ENG</Language>
          <Clock>
            7:45 PM
            <br />
            2/10/2021
          </Clock>
          <Notifications>
            <svg width="20" height="20" viewBox="0 0 20 20"><path d="M0 0h20v15h-8v5l-5-5H0z" /><path d="M4 4.500h12M4 7.500h12M4 10.500h8" stroke="#fff" strokeWidth="1.300" /></svg>
            <Counter $x={25} $y={25} $fill="#c9c9c9">2</Counter>
          </Notifications>
        </Tray>
      </Taskbar>
    </Desktop>
  );
}
